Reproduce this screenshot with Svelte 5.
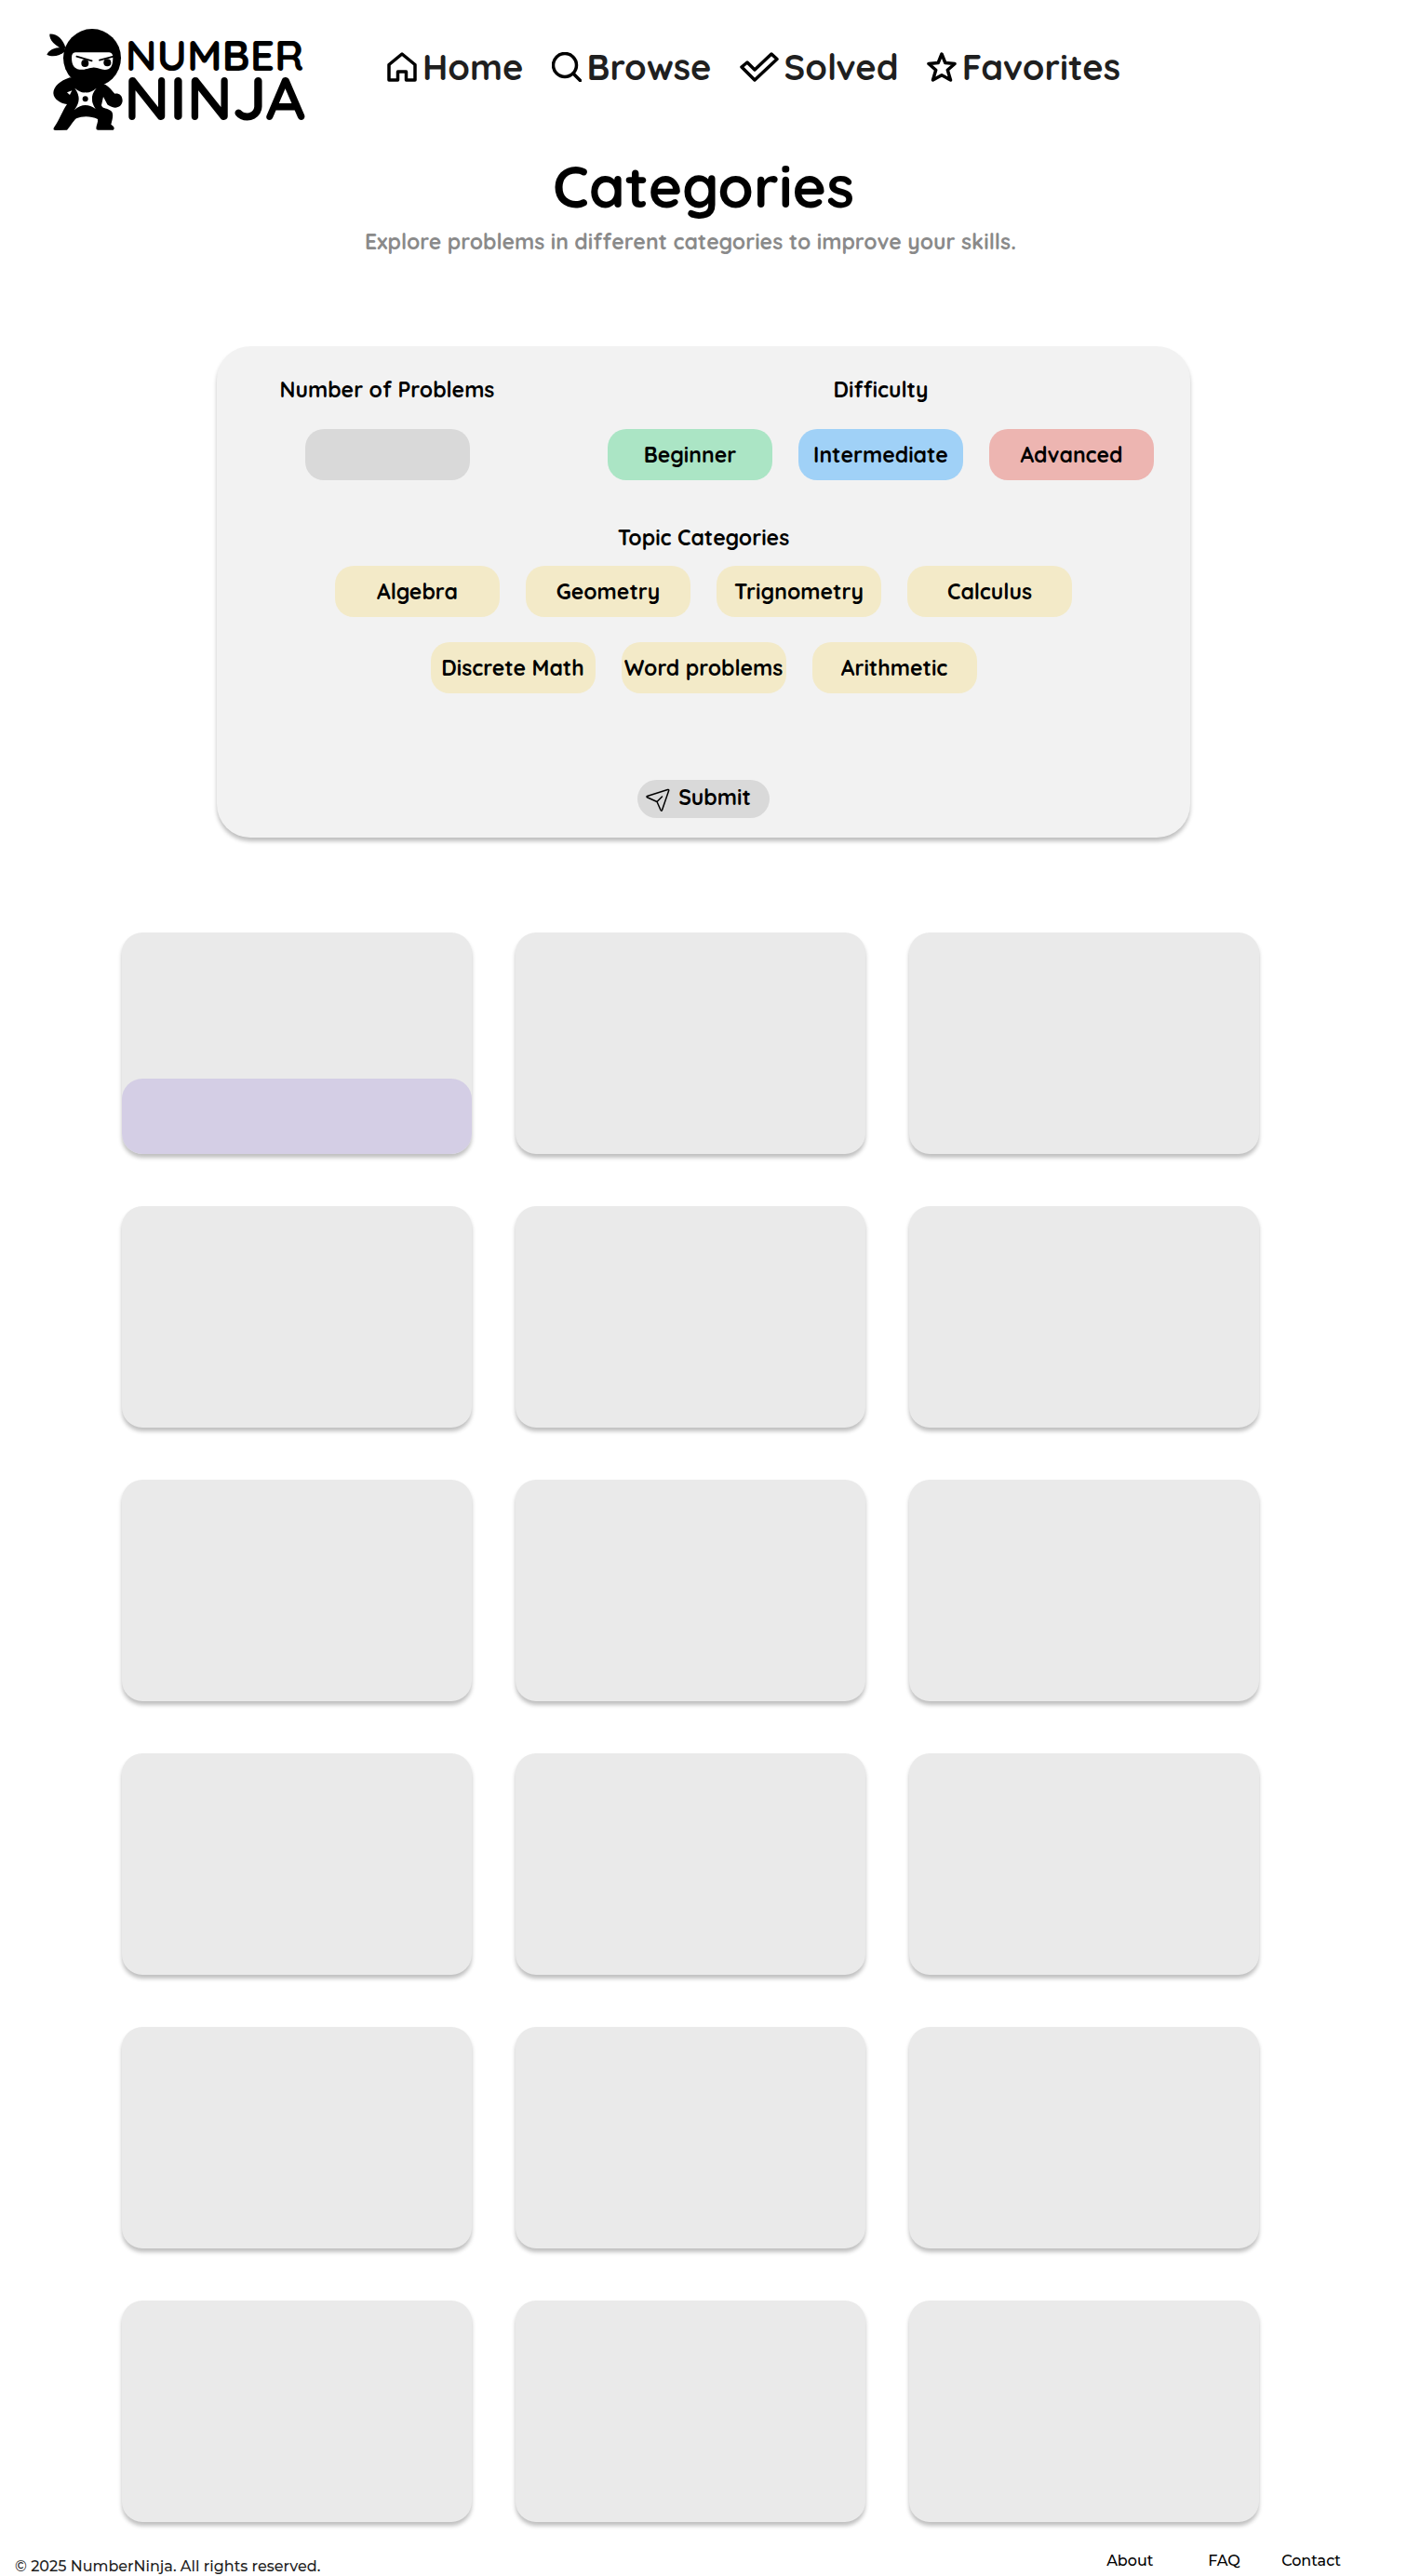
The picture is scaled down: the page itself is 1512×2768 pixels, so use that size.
<script>
  const difficulties = [
    { name: 'Beginner', tone: 'green' },
    { name: 'Intermediate', tone: 'blue' },
    { name: 'Advanced', tone: 'red' }
  ];
  const topicRows = [
    ['Algebra', 'Geometry', 'Trignometry', 'Calculus'],
    ['Discrete Math', 'Word problems', 'Arithmetic']
  ];
  const cards = Array.from({ length: 18 }, (_, i) => ({ id: i, banner: i === 0 }));

  let count = $state('');
  let difficulty = $state('');
  let topics = $state([]);

  function toggleTopic(topic) {
    topics = topics.includes(topic) ? topics.filter((t) => t !== topic) : [...topics, topic];
  }
</script>

<div class="page">
  <header>
    <a class="logo" href="#home" aria-label="Number Ninja">
      <svg viewBox="60 60 840 333" width="280" height="111" aria-hidden="true">
        <path d="M116 130C88 119 68 98 70 80C92 78 114 96 121 124Z" />
        <path d="M118 124C92 120 68 130 61 146C80 156 102 150 121 134Z" />
        <ellipse cx="207" cy="157" rx="93" ry="94" />
        <path
          d="M135 220C104 230 82 250 82 270C83 290 104 303 126 306C112 326 104 352 84 381Q79 390 90 390L126 389C136 380 144 362 156 352C176 343 204 344 225 354C227 364 220 374 220 384Q220 389 226 389L275 389Q284 382 268 371C274 350 279 330 262 324C250 318 240 320 237 310L244 301L266 313C284 323 304 314 305 295C305 278 294 270 280 272C270 262 262 249 250 243Z"
        />
        <path class="white" d="M151 254Q170 270 185 268Q202 270 221 254Q205 273 207 289Q206 304 218 321Q202 309 185 309Q168 309 150 324Q164 306 164 289Q164 272 151 254Z" />
        <path class="white" d="M126 268L142 262L135 276ZM243 282L237 309L257 308Z" />
        <circle cx="185" cy="289" r="9" />
        <path class="white" d="M153 139H262Q274 140 274 156C274 184 266 195 248 195C234 195 225 186 208 188C190 190 184 196 166 194C148 191 141 178 141 156Q141 140 153 139Z" />
        <circle cx="184" cy="174" r="12" />
        <circle cx="256" cy="172" r="12" />
        <path class="brow" d="M157 152L206 166M231 164L276 152" />
        <text class="word" x="314" y="197" font-size="138">NUMBER</text>
        <text class="word" x="310" y="356" font-size="200">NINJA</text>
      </svg>
    </a>
    <nav aria-label="Main">
      <a href="#home">
        <svg viewBox="0 0 32 32" width="32" height="32" aria-hidden="true">
          <path d="M2 30V13.500L16 2L30 13.500V30H20.500V21H11.500V30Z" />
        </svg>
        Home
      </a>
      <a href="#browse">
        <svg viewBox="0 0 32 32" width="32" height="32" aria-hidden="true">
          <circle cx="14" cy="14" r="12.500" />
          <path d="M23 23L30.500 30.500" />
        </svg>
        Browse
      </a>
      <a href="#solved">
        <svg viewBox="0 0 42 32" width="42" height="32" aria-hidden="true">
          <path d="M2 16L8 11L16 19L34 2L40 7.500L16 30Z" />
        </svg>
        Solved
      </a>
      <a href="#favorites">
        <svg viewBox="0 0 32 32" width="32" height="32" aria-hidden="true">
          <path d="M16 2L19.800 11.500L30 12.500L22.300 19.300L25.500 30L16 24.800L6.500 30L9.700 19.300L2 12.500L12.200 11.500Z" />
        </svg>
        Favorites
      </a>
    </nav>
  </header>

  <main>
    <h1>Categories</h1>
    <p class="lead">Explore problems in different categories to improve your skills.</p>

    <form class="panel" onsubmit={(e) => e.preventDefault()}>
      <div class="top">
        <div class="group">
          <label for="count">Number of Problems</label>
          <input id="count" type="text" inputmode="numeric" bind:value={count} />
        </div>
        <div class="group" role="group" aria-labelledby="difficulty-label">
          <span id="difficulty-label">Difficulty</span>
          <div class="row">
            {#each difficulties as d}
              <button
                type="button"
                class="chip {d.tone}"
                aria-pressed={difficulty === d.name}
                onclick={() => (difficulty = d.name)}>{d.name}</button
              >
            {/each}
          </div>
        </div>
      </div>

      <div class="topics" role="group" aria-labelledby="topic-label">
        <span id="topic-label">Topic Categories</span>
        <div class="rows">
          {#each topicRows as row}
            <div class="row">
              {#each row as topic}
                <button
                  type="button"
                  class="chip"
                  aria-pressed={topics.includes(topic)}
                  onclick={() => toggleTopic(topic)}>{topic}</button
                >
              {/each}
            </div>
          {/each}
        </div>
      </div>

      <button class="submit" type="submit">
        <svg viewBox="0 0 26 26" width="26" height="26" aria-hidden="true">
          <path d="M1.500 8.500L23.500 1.500Q25 1 24.700 2.500L17.500 23.500Q16.800 25 16 23.500L12 14.500L1.500 9.800Q0.500 9 1.500 8.500ZM12 14.500L17.500 9" />
        </svg>
        Submit
      </button>
    </form>

    <section class="cards" aria-label="Problems">
      {#each cards as card (card.id)}
        <article class="card">
          {#if card.banner}<div class="banner"></div>{/if}
        </article>
      {/each}
    </section>
  </main>

  <footer>
    <small>© 2025 NumberNinja. All rights reserved.</small>
    <div class="links">
      <a href="#about">About</a>
      <a href="#faq">FAQ</a>
      <a href="#contact">Contact</a>
    </div>
  </footer>
</div>

<style>
  :global(body) {
    margin: 0;
    background: #fff;
  }
  .page {
    color: #000;
    font: 700 23px/32px Quicksand, Lato, sans-serif;
  }
  a {
    color: inherit;
    text-decoration: none;
  }
  header {
    display: flex;
    align-items: flex-start;
    gap: 86px;
    padding: 30px 50px 0;
  }
  .logo,
  .logo svg {
    display: block;
    overflow: visible;
  }
  .white {
    fill: #fff;
  }
  .brow {
    fill: none;
    stroke: #000;
    stroke-width: 5;
    stroke-linecap: round;
  }
  .word {
    font-family: Quicksand, Lato, sans-serif;
    font-weight: 700;
  }
  nav {
    display: flex;
    gap: 30px;
    margin-top: 18px;
    color: #1f1f1f;
    font-size: 38px;
    line-height: 48px;
  }
  nav a {
    display: flex;
    align-items: center;
    gap: 6px;
  }
  nav svg {
    fill: none;
    stroke: #000;
    stroke-width: 3.500;
    stroke-linecap: round;
    stroke-linejoin: round;
  }
  h1 {
    margin: 19px 0 4px;
    text-align: center;
    font-size: 62px;
    line-height: 80px;
  }
  .lead {
    margin: 0 28px 96px 0;
    text-align: center;
    color: #8a8a8a;
  }
  .panel {
    box-sizing: border-box;
    max-width: 1046px;
    margin: 0 auto;
    padding: 31px 0 21px;
    display: flex;
    flex-direction: column;
    align-items: center;
    border-radius: 36px;
    background: #f2f2f2;
    box-shadow: 0 4px 4px rgba(0, 0, 0, 0.25);
  }
  .top {
    align-self: stretch;
    display: flex;
    justify-content: space-between;
    padding: 0 39px 0 67px;
  }
  .group {
    display: flex;
    flex-direction: column;
    align-items: center;
    gap: 26px;
    min-width: 232px;
  }
  .row {
    display: flex;
    justify-content: center;
    gap: 28px;
  }
  input,
  .chip {
    box-sizing: border-box;
    width: 177px;
    height: 55px;
    padding: 0;
    border: 0;
    border-radius: 20px;
    background: #f3eac8;
    color: #000;
    font: inherit;
    text-align: center;
    white-space: nowrap;
  }
  input {
    background: #d9d9d9;
  }
  .green {
    background: #abe5c5;
  }
  .blue {
    background: #a0d1f7;
  }
  .red {
    background: #edb5b1;
  }
  .topics {
    margin: 46px 0 93px;
    display: flex;
    flex-direction: column;
    align-items: center;
    gap: 14px;
  }
  .rows {
    display: flex;
    flex-direction: column;
    gap: 27px;
  }
  .submit {
    display: flex;
    align-items: center;
    gap: 9px;
    height: 41px;
    padding: 0 20px 4px 9px;
    border: 0;
    border-radius: 21px;
    background: #d9d9d9;
    color: #000;
    font: inherit;
  }
  .submit svg {
    margin-top: 6px;
    fill: none;
    stroke: #000;
    stroke-width: 1.500;
    stroke-linecap: round;
    stroke-linejoin: round;
  }
  .cards {
    display: grid;
    grid-template-columns: repeat(3, 1fr);
    gap: 56px 47px;
    padding: 102px 159px 0 131px;
  }
  .card {
    display: flex;
    flex-direction: column;
    justify-content: flex-end;
    min-height: 238px;
    border-radius: 22px;
    background: #eaeaea;
    box-shadow: 0 4px 4px rgba(0, 0, 0, 0.25);
  }
  .banner {
    height: 81px;
    border-radius: 22px;
    background: #d4cee5;
  }
  footer {
    display: flex;
    justify-content: space-between;
    align-items: flex-start;
    padding: 32px 71px 0 16px;
    font: 500 16px/20px Montserrat, Inter, sans-serif;
  }
  small {
    padding-top: 6px;
    font-size: 16px;
    color: #1f1f1f;
  }
  .links {
    display: grid;
    grid-template-columns: 109px 79px auto;
  }
</style>
